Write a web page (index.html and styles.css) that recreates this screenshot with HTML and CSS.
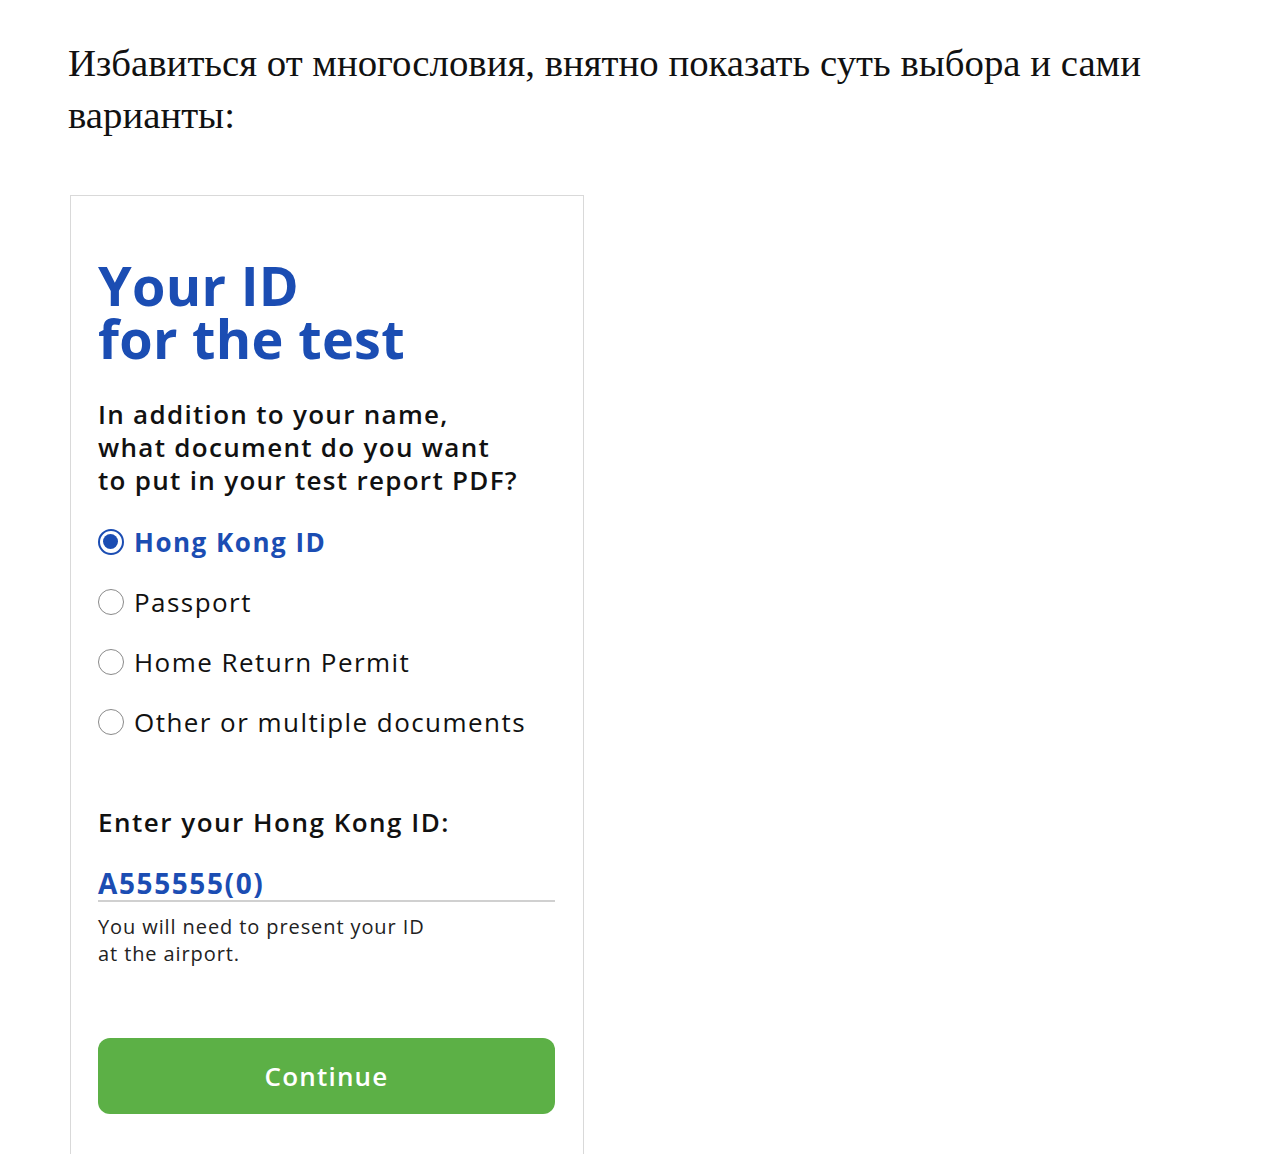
FILE: index.html
```html
<!DOCTYPE html>
<html lang="ru">
<head>
    <meta charset="UTF-8">
    <meta name="viewport" content="width=device-width, initial-scale=1.0">
    <title>Your ID for the test</title>
    <link rel="stylesheet" href="styles.css">
</head>
<body>
    <div id="page">
        <p class="intro">Избавиться от многословия, внятно показать суть выбора и сами варианты:</p>

        <div class="card">
            <h1 class="title">Your ID<br>for the test</h1>
            <p class="question">In addition to your name,<br>what document do you want<br>to put in your test report PDF?</p>

            <div class="options">
                <div class="option checked">
                    <span class="radio"></span>
                    <span class="label">Hong Kong ID</span>
                </div>
                <div class="option">
                    <span class="radio"></span>
                    <span class="label">Passport</span>
                </div>
                <div class="option">
                    <span class="radio"></span>
                    <span class="label">Home Return Permit</span>
                </div>
                <div class="option">
                    <span class="radio"></span>
                    <span class="label">Other or multiple documents</span>
                </div>
            </div>

            <p class="field-label">Enter your Hong Kong ID:</p>
            <div class="field">A555555(0)</div>
            <p class="hint">You will need to present your ID<br>at the airport.</p>

            <button class="btn">Continue</button>
        </div>
    </div>
</body>
</html>
```

FILE: styles.css
```css
* {
    padding: 0px;
    margin: 0px;
    box-sizing: border-box;
}
body {
    background: #fff;
    color: #111;
}
#page {
    padding: 37px 0 0 68px;
}
.intro {
    font-family: "Liberation Serif", "DejaVu Serif", serif;
    font-size: 38.8px;
    line-height: 52px;
    width: 1150px;
    color: #111;
}
.card {
    margin: 54px 0 0 2px;
    width: 514px;
    border: 1px solid #d9d9d9;
    border-bottom: none;
    padding: 63px 20px 60px 27px;
    font-family: "Open Sans", "Liberation Sans", sans-serif;
}
.title {
    font-size: 54px;
    line-height: 53px;
    font-weight: 700;
    color: #1b4db3;
    letter-spacing: 0.3px;
}
.question {
    margin-top: 33px;
    font-size: 26px;
    line-height: 33px;
    font-weight: 600;
    letter-spacing: 1.3px;
    color: #111;
}
.options {
    margin-top: 15px;
}
.option {
    height: 60px;
    display: flex;
    align-items: center;
    font-size: 26px;
    line-height: 33px;
    letter-spacing: 1.45px;
    color: #111;
}
.radio {
    width: 26px;
    height: 26px;
    border: 1.5px solid #8a8a8a;
    border-radius: 50%;
    margin-right: 10px;
    position: relative;
    flex-shrink: 0;
}
.option.checked .radio {
    border: 2.5px solid #1b4db3;
}
.option.checked .radio::after {
    content: "";
    position: absolute;
    left: 3px;
    top: 3px;
    width: 15px;
    height: 15px;
    border-radius: 50%;
    background: #1b4db3;
}
.option.checked .label {
    font-weight: 700;
    color: #1b4db3;
    letter-spacing: 1.5px;
}
.field-label {
    margin-top: 54px;
    font-size: 26px;
    line-height: 33px;
    font-weight: 600;
    letter-spacing: 1.5px;
}
.field {
    margin: 28px 8px 0 0;
    font-size: 28px;
    line-height: 33px;
    font-weight: 700;
    letter-spacing: 1.6px;
    color: #1b4db3;
    border-bottom: 2px solid #d0d0d0;
}
.hint {
    margin-top: 11px;
    font-size: 20px;
    line-height: 27px;
    letter-spacing: 0.9px;
    color: #222;
}
.btn {
    margin-top: 71px;
    width: calc(100% - 8px);
    height: 76px;
    border: none;
    border-radius: 12px;
    background: #5cb046;
    color: #fff;
    font-family: "Open Sans", "Liberation Sans", sans-serif;
    font-size: 26px;
    font-weight: 600;
    letter-spacing: 1.2px;
    cursor: pointer;
}
```
